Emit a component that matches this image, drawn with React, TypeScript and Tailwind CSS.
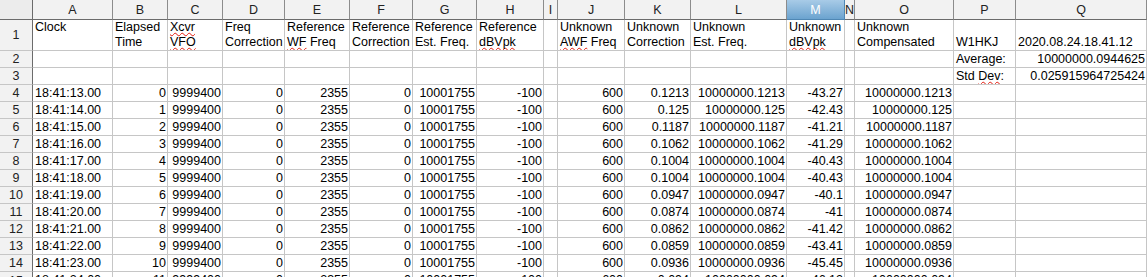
import type { ReactNode } from "react";

// Calc-style sheet: column letters, row numbers, a two-line title row and measurement rows.

const COLS = ["A", "B", "C", "D", "E", "F", "G", "H", "I", "J", "K", "L", "M", "N", "O", "P", "Q"];
const SELECTED = "M";

function Wavy({ children }: { children: ReactNode }) {
  return (
    <span className="underline decoration-wavy decoration-[#e31b0f] decoration-1 underline-offset-[1px] [text-decoration-skip-ink:none]">
      {children}
    </span>
  );
}

type Two = [ReactNode, ReactNode] | null;

const TITLES: Two[] = [
  ["Clock", ""],
  ["Elapsed", "Time"],
  [<Wavy>Xcvr</Wavy>, <Wavy>VFO</Wavy>],
  ["Freq", "Correction"],
  ["Reference", <><Wavy>WF</Wavy> Freq</>],
  ["Reference", "Correction"],
  ["Reference", "Est. Freq."],
  ["Reference", <Wavy>dBVpk</Wavy>],
  null,
  ["Unknown", <><Wavy>AWF</Wavy> Freq</>],
  ["Unknown", "Correction"],
  ["Unknown", "Est. Freq."],
  ["Unknown", <Wavy>dBVpk</Wavy>],
  null,
  ["Unknown", "Compensated"],
  ["", "W1HKJ"],
  ["", "2020.08.24.18.41.12"],
];

// sec, unknown correction, unknown dBVpk
const SAMPLES: [number, string, string][] = [
  [13, "0.1213", "-43.27"],
  [14, "0.125", "-42.43"],
  [15, "0.1187", "-41.21"],
  [16, "0.1062", "-41.29"],
  [17, "0.1004", "-40.43"],
  [18, "0.1004", "-40.43"],
  [19, "0.0947", "-40.1"],
  [20, "0.0874", "-41"],
  [21, "0.0862", "-41.42"],
  [22, "0.0859", "-43.41"],
  [23, "0.0936", "-45.45"],
  [24, "0.094", "-46.12"],
];

const cellBase = "border-r border-b border-[#c6c6c6] overflow-hidden whitespace-nowrap leading-[16px]";

function Cell({ children, right }: { children?: ReactNode; right?: boolean }) {
  return (
    <div className={`${cellBase} ${right ? "pr-[1px] text-right" : "pl-[2px] text-left"}`}>{children}</div>
  );
}

function RowHead({ n }: { n: number }) {
  return (
    <div className="flex items-center justify-center border-r border-r-[#6b6b6b] border-b border-b-[#c6c6c6] bg-[#f2f2f2] text-[#222]">
      {n}
    </div>
  );
}

export default function App() {
  return (
    <div className="h-[277px] w-[1148px] overflow-hidden bg-white font-['Liberation_Sans',Arial,sans-serif] text-[12.5px] text-black">
      <div className="grid grid-cols-[33px_80px_55px_55px_62px_65px_63px_64px_67px_14px_67px_66px_96px_58px_10px_99px_62px_131px] grid-rows-[20px_31px_repeat(13,17px)]">
        {/* column letters */}
        <div className="border-r border-b border-[#6b6b6b] bg-[#ececec]" />
        {COLS.map((c) =>
          c === SELECTED ? (
            <div
              key={c}
              className="flex items-center justify-center border-r border-b border-[#4f87b4] bg-gradient-to-b from-[#a8cbe7] to-[#6ba3cf] pt-[1px] text-white"
            >
              {c}
            </div>
          ) : (
            <div
              key={c}
              className="flex items-center justify-center border-r border-r-[#8c8c8c] border-b border-b-[#6b6b6b] bg-[#f2f2f2] pt-[1px] text-[#222]"
            >
              {c}
            </div>
          )
        )}

        {/* row 1: titles */}
        <RowHead n={1} />
        {TITLES.map((t, i) => (
          <div key={i} className="flex flex-col justify-end overflow-hidden whitespace-nowrap border-r border-b border-[#c6c6c6] pl-[2px] leading-[15px]">
            {t && (
              <>
                <span className="h-[15px]">{t[0]}</span>
                <span className="h-[15px]">{t[1]}</span>
              </>
            )}
          </div>
        ))}

        {/* row 2 */}
        <RowHead n={2} />
        {COLS.slice(0, 15).map((c) => (
          <Cell key={c} />
        ))}
        <Cell>Average:</Cell>
        <Cell right>10000000.0944625</Cell>

        {/* row 3 */}
        <RowHead n={3} />
        {COLS.slice(0, 15).map((c) => (
          <Cell key={c} />
        ))}
        <Cell>
          Std <Wavy>Dev</Wavy>:
        </Cell>
        <Cell right>0.025915964725424</Cell>

        {SAMPLES.map(([sec, corr, db], i) => (
          <div key={sec} className="contents">
            <RowHead n={i + 4} />
            <Cell>{`18:41:${sec}.00`}</Cell>
            <Cell right>{i}</Cell>
            <Cell right>9999400</Cell>
            <Cell right>0</Cell>
            <Cell right>2355</Cell>
            <Cell right>0</Cell>
            <Cell right>10001755</Cell>
            <Cell right>-100</Cell>
            <Cell />
            <Cell right>600</Cell>
            <Cell right>{corr}</Cell>
            <Cell right>{`10000000.${corr.split(".")[1]}`}</Cell>
            <Cell right>{db}</Cell>
            <Cell />
            <Cell right>{`10000000.${corr.split(".")[1]}`}</Cell>
            <Cell />
            <Cell />
          </div>
        ))}
      </div>
    </div>
  );
}
